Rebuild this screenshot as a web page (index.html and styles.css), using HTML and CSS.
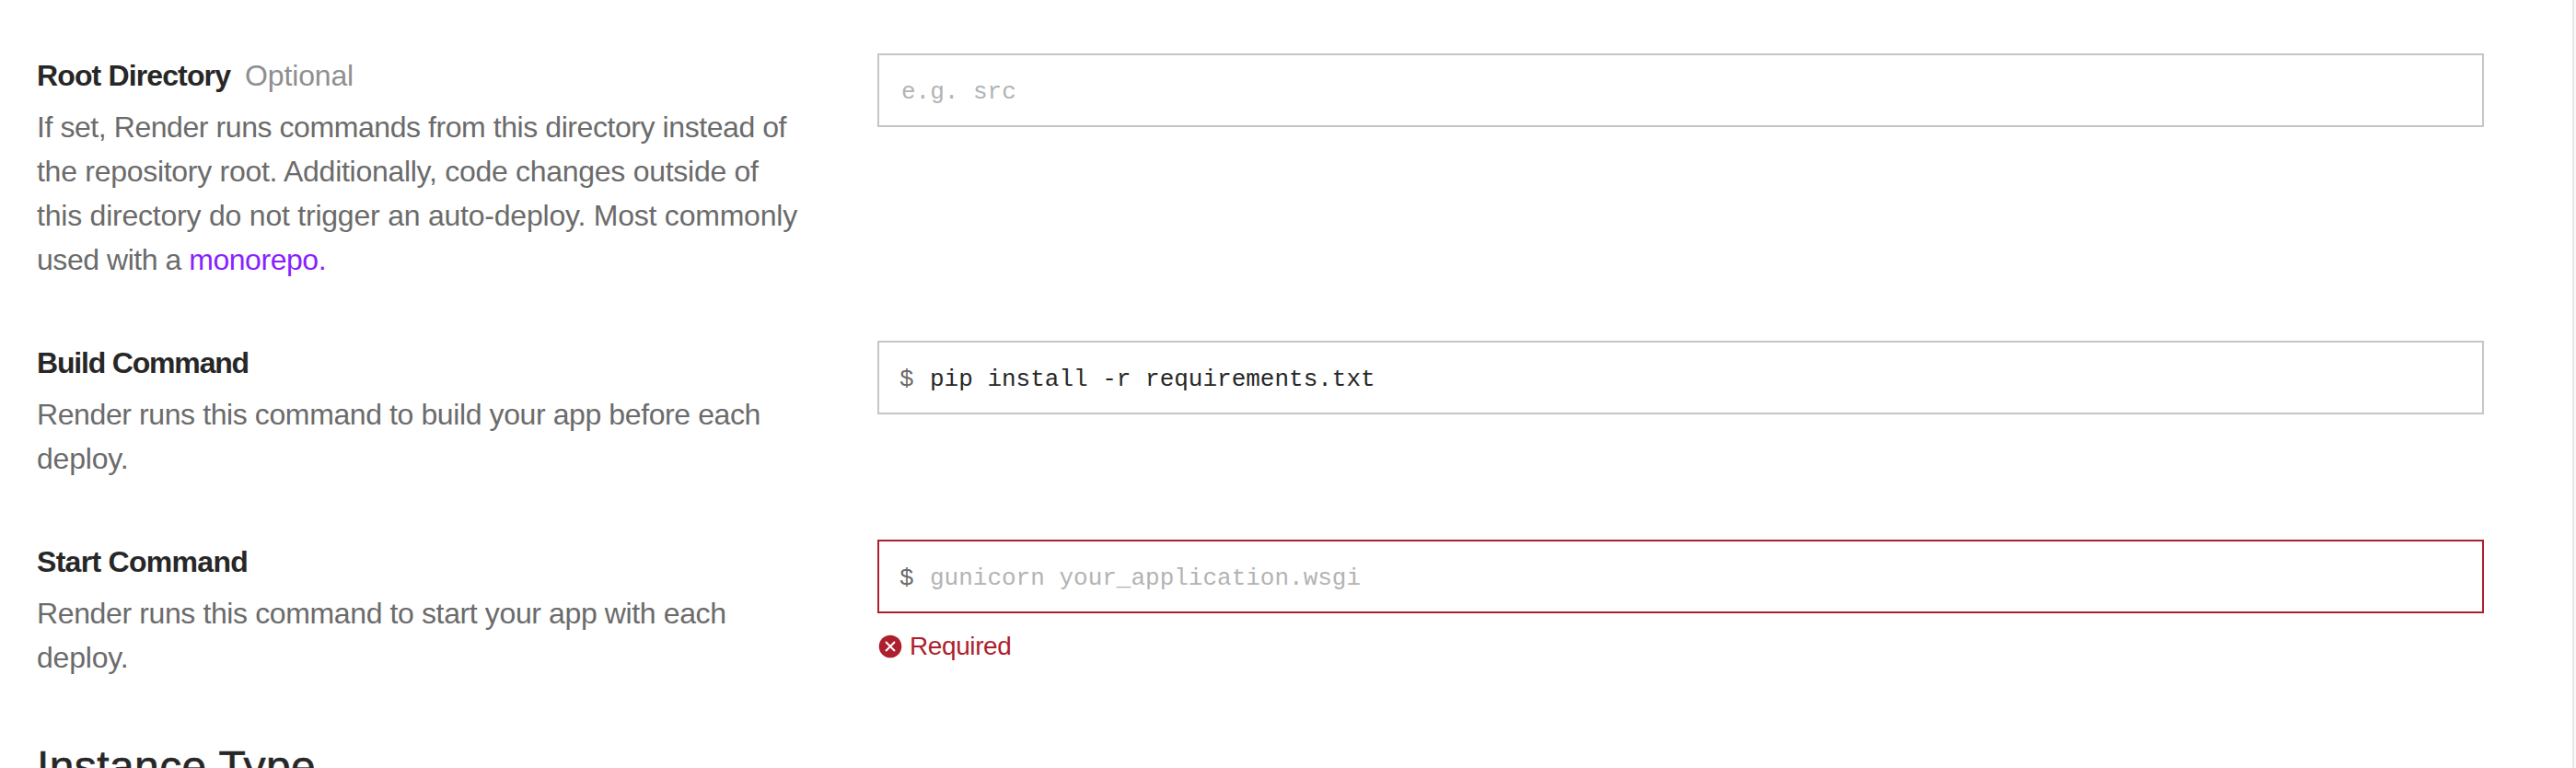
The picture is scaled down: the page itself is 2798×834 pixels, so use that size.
FILE: index.html
```html
<!DOCTYPE html>
<html lang="en">
<head>
<meta charset="utf-8">
<title>Service settings</title>
<link rel="stylesheet" href="styles.css">
</head>
<body>
<main class="panel">
  <section class="row row-root">
    <div class="info">
      <h3 class="label"><span class="t-root">Root Directory</span><span class="optional">Optional</span></h3>
      <p class="desc"><span class="l1">If set, Render runs commands from this directory instead of</span><br><span class="l2">the repository root. Additionally, code changes outside of</span><br><span class="l3">this directory do not trigger an auto-deploy. Most commonly</span><br><span class="l4">used with a <a class="link">monorepo.</a></span></p>
    </div>
    <div class="control">
      <div class="field"><span class="placeholder">e.g. src</span></div>
    </div>
  </section>
  <section class="row row-build">
    <div class="info">
      <h3 class="label"><span class="t-build">Build Command</span></h3>
      <p class="desc"><span class="l5">Render runs this command to build your app before each</span><br><span class="l7">deploy.</span></p>
    </div>
    <div class="control">
      <div class="field command"><span class="prompt">$</span><span class="value">pip install -r requirements.txt</span></div>
    </div>
  </section>
  <section class="row row-start">
    <div class="info">
      <h3 class="label"><span class="t-start">Start Command</span></h3>
      <p class="desc"><span class="l6">Render runs this command to start your app with each</span><br><span class="l7">deploy.</span></p>
    </div>
    <div class="control">
      <div class="field command invalid"><span class="prompt">$</span><span class="placeholder">gunicorn your_application.wsgi</span></div>
      <div class="error">
        <svg class="error-icon" width="26" height="26" viewBox="0 0 26 26"><circle cx="13" cy="13" r="12.3" fill="#ad1f2d"/><path d="M8 8L18 18M18 8L8 18" stroke="#fff" stroke-width="2"/></svg>
        <span>Required</span>
      </div>
    </div>
  </section>
  <h2 class="heading">Instance Type</h2>
</main>
</body>
</html>
```

FILE: styles.css
```css
* { box-sizing: border-box; }
body {
  margin: 0;
  height: 834px;
  overflow: hidden;
  background: #fafafa;
  font-family: "Liberation Sans", Arial, sans-serif;
  color: #272727;
}
.panel {
  width: 2796px;
  height: 834px;
  overflow: hidden;
  padding: 58px 96px 0 40px;
  background: #fff;
  border-right: 2px solid #e6e6e6;
}
.row { display: grid; grid-template-columns: 849px 1745px; column-gap: 64px; }
.row-root { height: 312px; }
.row-build { height: 216px; }
.row-start { height: 215px; }
.info { white-space: nowrap; }
.label { margin: 0; font-size: 32px; font-weight: 700; line-height: 48px; }
.t-root { letter-spacing: -0.87px; }
.t-build { letter-spacing: -1.18px; }
.t-start { letter-spacing: -0.7px; }
.optional { margin-left: 16px; font-weight: 400; color: #8f8f8f; letter-spacing: -0.15px; }
.desc { margin: 8px 0 0; font-size: 32px; line-height: 48px; color: #6b6b6b; }
.l1 { letter-spacing: -0.43px; }
.l2 { letter-spacing: -0.28px; }
.l3 { letter-spacing: -0.22px; }
.l4 { letter-spacing: -0.46px; }
.l5 { letter-spacing: -0.4px; }
.l6 { letter-spacing: -0.38px; }
.l7 { letter-spacing: -0.2px; }
.link { color: #8a1fff; }
.field {
  display: flex;
  align-items: center;
  height: 80px;
  padding: 4px 24px 0;
  border: 2px solid #c6c6c6;
  font: 26px "Liberation Mono", monospace;
}
.command { padding-left: 22px; }
.invalid { border-color: #ad1f2d; }
.prompt { width: 33px; color: #6b6b6b; }
.placeholder { color: #b3b3b3; }
.error {
  display: flex;
  align-items: center;
  gap: 8px;
  margin: 16px 0 0 1px;
  height: 40px;
  color: #ad1f2d;
  font-size: 28px;
  letter-spacing: -0.4px;
}
.heading { margin: 0; font-size: 48px; font-weight: 400; line-height: 64px; letter-spacing: 0.4px; white-space: nowrap; -webkit-text-stroke: 0.6px #272727; }
```
